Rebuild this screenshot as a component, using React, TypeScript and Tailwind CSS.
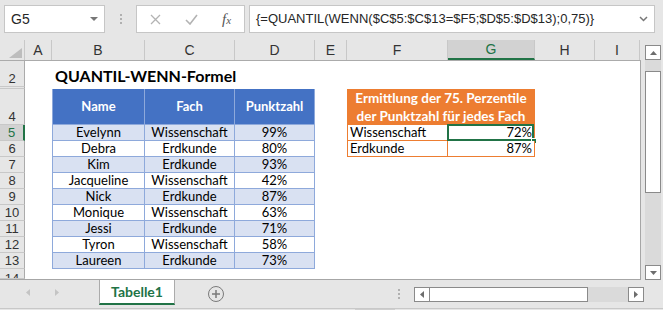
import React from "react";

const cell = "font-['Lato','Liberation_Sans',sans-serif] text-[13px] text-black";
const ui = "font-['Liberation_Sans','Noto_Sans',sans-serif]";

const cols = [
  { k: "A", w: "w-[27px]" },
  { k: "B", w: "w-[93px]" },
  { k: "C", w: "w-[90px]" },
  { k: "D", w: "w-[80px]" },
  { k: "E", w: "w-[32px]" },
  { k: "F", w: "w-[101px]" },
  { k: "G", w: "w-[87px]" },
  { k: "H", w: "w-[60px]" },
  { k: "I", w: "w-[45px]" },
];

const students = [
  ["Evelynn", "Wissenschaft", "99%"],
  ["Debra", "Erdkunde", "80%"],
  ["Kim", "Erdkunde", "93%"],
  ["Jacqueline", "Wissenschaft", "42%"],
  ["Nick", "Erdkunde", "87%"],
  ["Monique", "Wissenschaft", "63%"],
  ["Jessi", "Erdkunde", "71%"],
  ["Tyron", "Wissenschaft", "58%"],
  ["Laureen", "Erdkunde", "73%"],
];

const rows = [
  { n: 2, h: "h-[26px]" },
  { n: 3, h: "h-[2px]" },
  { n: 4, h: "h-[36px]" },
  ...students.map((_, i) => ({ n: i + 5, h: "h-[16px]" })),
  { n: 14, h: "h-[10px]" },
];

function Cell({ r, c, w }: { r: number; c: string; w: string }) {
  const base = `${w} h-full shrink-0 flex`;

  if (r === 2 && c === "B") {
    return (
      <div className={`${base} items-end overflow-visible`}>
        <span className="whitespace-nowrap pl-[3px] pb-[3px] font-['Lato',sans-serif] text-[16px] font-bold text-black leading-none">
          QUANTIL-WENN-Formel
        </span>
      </div>
    );
  }

  if (r === 4 && ["B", "C", "D"].includes(c)) {
    const label = c === "B" ? "Name" : c === "C" ? "Fach" : "Punktzahl";
    return (
      <div
        className={`${base} items-center justify-center bg-[#4472c4] border-r border-b border-[#8ea9db] ${c === "B" ? "border-l" : ""}`}
      >
        <span className={`${cell} !text-white font-bold`}>{label}</span>
      </div>
    );
  }

  if (r >= 5 && r <= 13 && ["B", "C", "D"].includes(c)) {
    const s = students[r - 5];
    const v = c === "B" ? s[0] : c === "C" ? s[1] : s[2];
    return (
      <div
        className={`${base} items-center justify-center border-r border-b border-[#8ea9db] ${r % 2 === 1 ? "bg-[#d9e1f2]" : "bg-white"} ${c === "B" ? "border-l" : ""}`}
      >
        <span className={`${cell} leading-none whitespace-nowrap`}>{v}</span>
      </div>
    );
  }

  if (r === 4 && c === "F") {
    return (
      <div className="w-[188px] h-full shrink-0 flex flex-col items-center justify-center bg-[#ed7d31]">
        <span className={`${cell} !text-[13.5px] !text-white font-bold leading-[18px] text-center whitespace-nowrap`}>
          Ermittlung der 75. Perzentile
          <br />
          der Punktzahl für jedes Fach
        </span>
      </div>
    );
  }
  if (r === 4 && c === "G") return null;

  if ((r === 5 || r === 6) && c === "F") {
    return (
      <div className={`${base} items-center border-l border-r border-b border-[#ed7d31] bg-white pl-[2px]`}>
        <span className={`${cell} leading-none`}>{r === 5 ? "Wissenschaft" : "Erdkunde"}</span>
      </div>
    );
  }

  if ((r === 5 || r === 6) && c === "G") {
    return (
      <div className={`${base} relative items-center justify-end border-r border-b border-[#ed7d31] bg-white pr-[2px]`}>
        <span className={`${cell} leading-none`}>{r === 5 ? "72%" : "87%"}</span>
        {r === 5 && (
          <>
            <div className="absolute -left-[1px] -top-[1px] right-0 -bottom-[1px] border-2 border-[#217346]" />
            <div className="absolute -right-[3px] -bottom-[4px] w-[6px] h-[6px] bg-[#217346] border border-white" />
          </>
        )}
      </div>
    );
  }

  return <div className={base} />;
}

function FormulaBar() {
  return (
    <div className="h-[40px] flex items-start pt-[5px]">
      <div className="ml-[4px] w-[101px] h-[28px] bg-white border border-[#c6c6c6] flex items-center justify-between pl-[6px] pr-[6px]">
        <span className={`${ui} text-[14px] text-[#262626]`}>G5</span>
        <svg width="8" height="5" viewBox="0 0 8 5">
          <path d="M0 0 H8 L4 4 Z" fill="#777" />
        </svg>
      </div>
      <div className="ml-[14px] w-[4px] h-[28px] flex flex-col items-center justify-center gap-[2px]">
        <span className="w-[2px] h-[2px] bg-[#b0b0b0]" />
        <span className="w-[2px] h-[2px] bg-[#b0b0b0]" />
        <span className="w-[2px] h-[2px] bg-[#b0b0b0]" />
      </div>
      <div className="ml-[13px] w-[109px] h-[28px] bg-white border border-[#c6c6c6] flex items-center">
        <svg className="ml-[13px]" width="11" height="11" viewBox="0 0 11 11">
          <path d="M1 1 L10 10 M10 1 L1 10" stroke="#b3b3b3" strokeWidth="1.3" />
        </svg>
        <svg className="ml-[24px]" width="13" height="11" viewBox="0 0 13 11">
          <path d="M1 6 L5 10 L12 1" stroke="#b3b3b3" strokeWidth="1.6" fill="none" />
        </svg>
        <span className="ml-[24px] font-['Liberation_Serif',serif] italic text-[15px] text-[#555] leading-none">
          f<span className="text-[11px]">x</span>
        </span>
      </div>
      <div className="ml-[4px] w-[406px] h-[28px] bg-white border border-[#c6c6c6] flex items-center justify-between pl-[6px] pr-[6px]">
        <span className={`${ui} text-[13px] text-[#262626] whitespace-nowrap`}>
          {"{=QUANTIL(WENN($C$5:$C$13=$F5;$D$5:$D$13);0,75)}"}
        </span>
        <svg width="9" height="6" viewBox="0 0 9 6">
          <path d="M1 1 L4.5 4.5 L8 1" stroke="#777" strokeWidth="1.5" fill="none" />
        </svg>
      </div>
    </div>
  );
}

function ColumnHeaders() {
  return (
    <div className="h-[21px] flex border-b border-[#ababab]">
      <div className="w-[25px] h-full shrink-0 border-r border-[#c8c8c8] flex items-end justify-end pr-[2px] pb-[2px]">
        <svg width="13" height="10" viewBox="0 0 13 10">
          <path d="M13 0 V10 H0 Z" fill="#bdbdbd" />
        </svg>
      </div>
      {cols.map((c) => (
        <div
          key={c.k}
          className={`${c.w} h-full shrink-0 flex items-center justify-center border-r border-[#c8c8c8] ${c.k === "G" ? "bg-[#d2d2d2] border-b-2 border-b-[#217346] text-[#217346]" : "text-[#333]"}`}
        >
          <span className={`${ui} text-[14px] leading-none`}>{c.k}</span>
        </div>
      ))}
    </div>
  );
}

function VScroll() {
  return (
    <div className="w-[22px] h-full flex flex-col pl-[4px]">
      <div className="mt-[5px] w-[16px] h-[15px] bg-white border border-[#8a8a8a] flex items-center justify-center">
        <svg width="7" height="4" viewBox="0 0 7 4">
          <path d="M0 4 L3.5 0 L7 4 Z" fill="#6d6d6d" />
        </svg>
      </div>
      <div className="w-[16px] flex-1 bg-[#dadada] flex flex-col">
        <div className="mt-[11px] h-[122px] bg-white border border-[#8a8a8a]" />
      </div>
      <div className="w-[16px] h-[15px] bg-white border border-[#8a8a8a] flex items-center justify-center">
        <svg width="7" height="4" viewBox="0 0 7 4">
          <path d="M0 0 L3.5 4 L7 0 Z" fill="#6d6d6d" />
        </svg>
      </div>
    </div>
  );
}

function BottomBar() {
  return (
    <div className="h-[30px] flex flex-col">
      <div className="h-[28px] flex items-start">
        <div className="w-[99px] h-[25px] flex items-center">
          <svg className="ml-[26px]" width="4" height="7" viewBox="0 0 4 7">
            <path d="M4 0 V7 L0 3.5 Z" fill="#c4c4c4" />
          </svg>
          <svg className="ml-[25px]" width="4" height="7" viewBox="0 0 4 7">
            <path d="M0 0 V7 L4 3.5 Z" fill="#c4c4c4" />
          </svg>
        </div>
        <div className="w-[76px] h-[25px] bg-white border-l border-r border-[#ababab] border-b-2 border-b-[#217346] flex items-center justify-center">
          <span className="font-['Lato',sans-serif] text-[14px] font-bold text-[#217346]">Tabelle1</span>
        </div>
        <div className="ml-[33px] mt-[6px] w-[16px] h-[16px] rounded-full border-[1.5px] border-[#7a7a7a] flex items-center justify-center">
          <svg width="8" height="8" viewBox="0 0 8 8">
            <path d="M4 0 V8 M0 4 H8" stroke="#7a7a7a" strokeWidth="1.5" />
          </svg>
        </div>
        <div className="ml-[174px] mt-[9px] flex flex-col gap-[2px]">
          <span className="w-[2px] h-[2px] bg-[#b0b0b0]" />
          <span className="w-[2px] h-[2px] bg-[#b0b0b0]" />
          <span className="w-[2px] h-[2px] bg-[#b0b0b0]" />
        </div>
        <div className="ml-[14px] mt-[7px] h-[15px] flex">
          <div className="w-[16px] h-full bg-white border border-[#8a8a8a] flex items-center justify-center">
            <svg width="4" height="7" viewBox="0 0 4 7">
              <path d="M4 0 V7 L0 3.5 Z" fill="#6d6d6d" />
            </svg>
          </div>
          <div className="w-[158px] h-full bg-white border border-[#8a8a8a] border-l-0" />
          <div className="w-[40px] h-full bg-[#dadada]" />
          <div className="w-[16px] h-full bg-white border border-[#8a8a8a] flex items-center justify-center">
            <svg width="4" height="7" viewBox="0 0 4 7">
              <path d="M0 0 V7 L4 3.5 Z" fill="#6d6d6d" />
            </svg>
          </div>
        </div>
      </div>
      <div className="h-[2px] border-t border-[#c8c8c8] flex">
        <div className="ml-[355px] w-[40px] h-full bg-[#cfcfcf]" />
      </div>
    </div>
  );
}

export default function App() {
  return (
    <div className="w-[663px] h-[310px] bg-[#e6e6e6] overflow-hidden">
      <FormulaBar />
      <div className="h-[240px] flex">
        <div className="w-[641px] h-full flex flex-col">
          <ColumnHeaders />
          <div className="flex-1 flex flex-col border-r border-b border-[#a6a6a6] bg-white">
            {rows.map((r) => (
              <div key={r.n} className={`${r.h} flex shrink-0`}>
                <div
                  className={`w-[25px] h-full shrink-0 flex justify-center overflow-hidden border-b border-[#c8c8c8] ${r.n === 14 ? "items-start pt-[2px]" : "items-end"} ${r.n === 5 ? "bg-[#d2d2d2] border-r-2 border-r-[#217346] text-[#217346]" : "bg-[#e6e6e6] border-r border-r-[#ababab] text-[#333]"}`}
                >
                  {r.n !== 3 && (
                    <span className={`${ui} text-[13px] leading-[15px]`}>{r.n}</span>
                  )}
                </div>
                {cols.map((c) => (
                  <Cell key={c.k} r={r.n} c={c.k} w={c.w} />
                ))}
              </div>
            ))}
          </div>
        </div>
        <VScroll />
      </div>
      <BottomBar />
    </div>
  );
}
